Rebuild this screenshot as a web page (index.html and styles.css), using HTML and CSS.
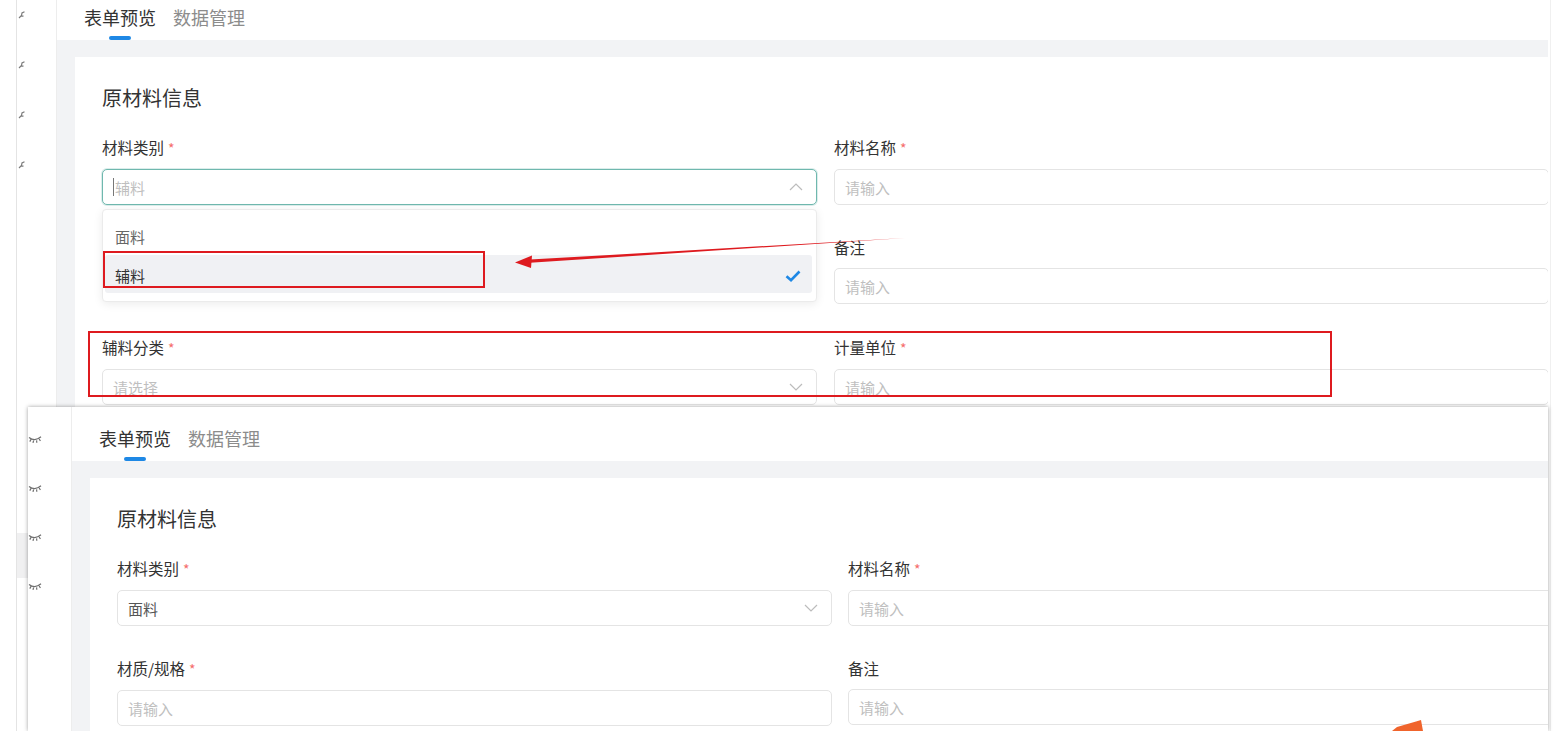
FILE: index.html
```html
<!DOCTYPE html>
<html lang="zh-CN">
<head>
    <meta charset="UTF-8">
    <title>表单预览</title>
    <link rel="stylesheet" href="styles.css">
</head>
<body>
<div class="desk">

    <!-- first capture: dropdown open -->
    <div class="screen screen-back">
        <div class="rail">
            <div class="rail-item"><svg class="ico-pen" width="7" height="8" viewBox="0 0 7 8"><path d="M1 7 L3.5 4.5 L4 2 L6.5 0.8 M3 5 L5.5 5.2" /></svg></div>
            <div class="rail-item"><svg class="ico-pen" width="7" height="8" viewBox="0 0 7 8"><path d="M1 7 L3.5 4.5 L4 2 L6.5 0.8 M3 5 L5.5 5.2" /></svg></div>
            <div class="rail-item"><svg class="ico-pen" width="7" height="8" viewBox="0 0 7 8"><path d="M1 7 L3.5 4.5 L4 2 L6.5 0.8 M3 5 L5.5 5.2" /></svg></div>
            <div class="rail-item"><svg class="ico-pen" width="7" height="8" viewBox="0 0 7 8"><path d="M1 7 L3.5 4.5 L4 2 L6.5 0.8 M3 5 L5.5 5.2" /></svg></div>
            <div class="rail-hover"></div>
        </div>
        <div class="main">
            <div class="tabs">
                <div class="tab active">表单预览<span class="tab-bar"></span></div>
                <div class="tab">数据管理</div>
            </div>
            <div class="page">
                <div class="card">
                    <h2 class="card-title">原材料信息</h2>
                    <div class="form">
                        <div class="field">
                            <div class="field-label">材料类别<span class="req">*</span></div>
                            <div class="select-wrap">
                                <div class="input focused"><span class="caret"></span><span class="placeholder">辅料</span>
                                    <svg class="chev" width="14" height="8" viewBox="0 0 14 8"><polyline points="1,7 7,1 13,7" /></svg>
                                </div>
                                <div class="dropdown">
                                    <div class="option">面料</div>
                                    <div class="option selected">辅料
                                        <svg class="check" width="16" height="12" viewBox="0 0 16 12"><path d="M1.5 6.2 L6 10.2 L14.5 1.5" /></svg>
                                    </div>
                                </div>
                            </div>
                        </div>
                        <div class="field">
                            <div class="field-label">材料名称<span class="req">*</span></div>
                            <div class="input"><span class="placeholder">请输入</span></div>
                        </div>
                        <!-- row under the open dropdown -->
                        <div class="field covered">
                            <div class="field-label">材质/规格<span class="req">*</span></div>
                            <div class="input"><span class="placeholder">请输入</span></div>
                        </div>
                        <div class="field">
                            <div class="field-label">备注</div>
                            <div class="input"><span class="placeholder">请输入</span></div>
                        </div>
                        <div class="field">
                            <div class="field-label">辅料分类<span class="req">*</span></div>
                            <div class="input"><span class="placeholder">请选择</span>
                                <svg class="chev" width="14" height="8" viewBox="0 0 14 8"><polyline points="1,1 7,7 13,1" /></svg>
                            </div>
                        </div>
                        <div class="field">
                            <div class="field-label">计量单位<span class="req">*</span></div>
                            <div class="input"><span class="placeholder">请输入</span></div>
                        </div>
                    </div>
                    <div class="actions"><span class="btn-primary"></span></div>
                </div>
            </div>
        </div>
    </div>

    <div class="gutter"></div>

    <!-- second capture pasted over the first -->
    <div class="screen screen-front">
        <div class="rail">
            <div class="rail-item"><svg class="ico-lash" width="14" height="8" viewBox="0 0 14 8"><path d="M1 1.5 Q7 6 13 0.8 M3 3.4 L1.8 5.6 M5.6 4.5 L5 6.9 M8.6 4.4 L8.8 6.8 M11.2 3 L12.4 5" /></svg></div>
            <div class="rail-item"><svg class="ico-lash" width="14" height="8" viewBox="0 0 14 8"><path d="M1 1.5 Q7 6 13 0.8 M3 3.4 L1.8 5.6 M5.6 4.5 L5 6.9 M8.6 4.4 L8.8 6.8 M11.2 3 L12.4 5" /></svg></div>
            <div class="rail-item"><svg class="ico-lash" width="14" height="8" viewBox="0 0 14 8"><path d="M1 1.5 Q7 6 13 0.8 M3 3.4 L1.8 5.6 M5.6 4.5 L5 6.9 M8.6 4.4 L8.8 6.8 M11.2 3 L12.4 5" /></svg></div>
            <div class="rail-item"><svg class="ico-lash" width="14" height="8" viewBox="0 0 14 8"><path d="M1 1.5 Q7 6 13 0.8 M3 3.4 L1.8 5.6 M5.6 4.5 L5 6.9 M8.6 4.4 L8.8 6.8 M11.2 3 L12.4 5" /></svg></div>
        </div>
        <div class="main">
            <div class="tabs">
                <div class="tab active">表单预览<span class="tab-bar"></span></div>
                <div class="tab">数据管理</div>
            </div>
            <div class="page">
                <div class="card">
                    <h2 class="card-title">原材料信息</h2>
                    <div class="form">
                        <div class="field">
                            <div class="field-label">材料类别<span class="req">*</span></div>
                            <div class="input"><span class="value">面料</span>
                                <svg class="chev" width="14" height="8" viewBox="0 0 14 8"><polyline points="1,1 7,7 13,1" /></svg>
                            </div>
                        </div>
                        <div class="field">
                            <div class="field-label">材料名称<span class="req">*</span></div>
                            <div class="input"><span class="placeholder">请输入</span></div>
                        </div>
                        <div class="field">
                            <div class="field-label">材质/规格<span class="req">*</span></div>
                            <div class="input"><span class="placeholder">请输入</span></div>
                        </div>
                        <div class="field">
                            <div class="field-label">备注</div>
                            <div class="input"><span class="placeholder">请输入</span></div>
                        </div>
                    </div>
                </div>
            </div>
        </div>
    </div>

    <!-- annotation marks drawn over both captures -->
    <svg class="marks" width="1568" height="731" viewBox="0 0 1568 731">
        <rect x="104" y="252" width="380" height="35" />
        <rect x="89" y="332" width="1242" height="64" />
        <polygon class="arrow" points="905,238 530,259.6 530,262.8" />
        <polygon class="arrow" points="515,262.5 532,255.5 531,268" />
        <polygon class="orange" points="1392,731 1397,727 1416,721.5 1421,720 1423,731" />
    </svg>
</div>
</body>
</html>
```

FILE: styles.css
```css
* {
    margin: 0;
    padding: 0;
    box-sizing: border-box;
}

body {
    font-family: "Noto Sans CJK SC", "Noto Sans", sans-serif;
    background-color: #fff;
    color: #333;
}

.desk {
    position: relative;
    width: 1568px;
    height: 731px;
    overflow: hidden;
    display: flex;
    background-color: #fff;
}

/* one captured screen */
.screen {
    display: flex;
    background-color: #fff;
    overflow: hidden;
}

.screen-back {
    flex: none;
    width: 1532px;
    height: 745px;
    margin-left: 16px;
    margin-top: -14px;
    border-left: 1px solid #e4e4e4;
}

.screen-front {
    position: absolute;
    left: 28px;
    top: 407px;
    width: 1520px;
    height: 324px;
    box-shadow: 0 0 4px rgba(0, 0, 0, 0.38);
    z-index: 3;
}

.gutter {
    flex: none;
    width: 18px;
    margin-left: 2px;
    border-left: 1px solid #f0f0f0;
}

/* side rail */
.rail {
    flex: none;
    width: 40px;
    padding-top: 4px;
    border-right: 1px solid #ededed;
    display: flex;
    flex-direction: column;
}

.screen-front .rail {
    width: 44px;
    padding-top: 8px;
}

.rail-item {
    height: 50px;
    display: flex;
    align-items: center;
    padding-left: 1px;
}

.screen-front .rail-item {
    height: 49px;
    padding-left: 0;
}

.rail-hover {
    margin-top: 343px;
    height: 45px;
    background-color: #f0f0f1;
}

.ico-pen path {
    fill: none;
    stroke: #7a7a7a;
    stroke-width: 1.2;
}

.ico-lash path {
    fill: none;
    stroke: #6e6e6e;
    stroke-width: 1.2;
}

.main {
    flex: 1;
    min-width: 0;
    display: flex;
    flex-direction: column;
}

/* tabs */
.tabs {
    flex: none;
    height: 54px;
    display: flex;
    gap: 17px;
    padding: 19px 0 0 27px;
    background-color: #fff;
}

.tab {
    display: flex;
    flex-direction: column;
    align-items: center;
    font-size: 18px;
    line-height: 24px;
    color: #8c8c8c;
}

.tab.active {
    color: #333;
}

.tab-bar {
    width: 22px;
    height: 4px;
    margin-top: 7px;
    border-radius: 2px;
    background-color: #1e88e5;
}

/* gray page + card */
.page {
    flex: 1;
    background-color: #f2f3f5;
    padding: 17px 0 0 18px;
}

.card {
    height: 100%;
    background-color: #fff;
    padding: 27px 0 0 27px;
    overflow: hidden;
}

.card-title {
    font-size: 20px;
    line-height: 28px;
    font-weight: 400;
    color: #333;
    margin-bottom: 24px;
}

.form {
    display: grid;
    grid-template-columns: 715px 715px;
    column-gap: 17px;
    row-gap: 31px;
}

.screen-front .form {
    column-gap: 16px;
}

.field.covered {
    visibility: hidden;
}

.field-label {
    font-size: 15.5px;
    line-height: 22px;
    color: #333;
    margin-bottom: 10px;
}

.req {
    color: #f56c6c;
    font-size: 14px;
    margin-left: 4px;
}

.input {
    height: 36px;
    border: 1px solid #e4e4e4;
    border-radius: 5px;
    padding: 0 13px 0 10px;
    display: flex;
    align-items: center;
    font-size: 15px;
    color: #555;
    background-color: #fff;
}

.input.focused {
    border-color: #6fb8ae;
    box-shadow: 0 0 0 1px rgba(111, 184, 174, 0.25);
}

.caret {
    width: 1px;
    height: 18px;
    background-color: #777;
    margin-right: 1px;
}

.placeholder {
    color: #bfbfbf;
}

.chev {
    margin-left: auto;
}

.chev polyline {
    fill: none;
    stroke: #bcbcbc;
    stroke-width: 1.2;
}

/* open dropdown */
.select-wrap {
    position: relative;
}

.dropdown {
    position: absolute;
    top: calc(100% + 4px);
    left: 0;
    right: 0;
    background-color: #fff;
    border: 1px solid #ebebeb;
    border-radius: 4px;
    box-shadow: 0 2px 10px rgba(0, 0, 0, 0.08);
    padding: 7px 4px 8px 2px;
    z-index: 2;
}

.option {
    height: 38px;
    display: flex;
    align-items: center;
    padding: 0 11px 0 10px;
    font-size: 15px;
    color: #666;
    border-radius: 3px;
}

.option.selected {
    padding-top: 3px;
    background-color: #f0f1f4;
    color: #333;
}

.check {
    margin-left: auto;
}

.check path {
    fill: none;
    stroke: #1e88e5;
    stroke-width: 2.6;
}

.actions {
    display: flex;
    justify-content: flex-end;
    margin-top: 3px;
}

.btn-primary {
    width: 93px;
    height: 32px;
    border-radius: 4px;
    background-color: #1e88e5;
}

/* red marks on top */
.marks {
    position: absolute;
    left: 0;
    top: 0;
    z-index: 5;
    pointer-events: none;
}

.marks rect {
    fill: none;
    stroke: #de1a1f;
    stroke-width: 2;
}

.marks .arrow {
    fill: #de1a1f;
}

.marks .orange {
    fill: #f0642c;
}
```
